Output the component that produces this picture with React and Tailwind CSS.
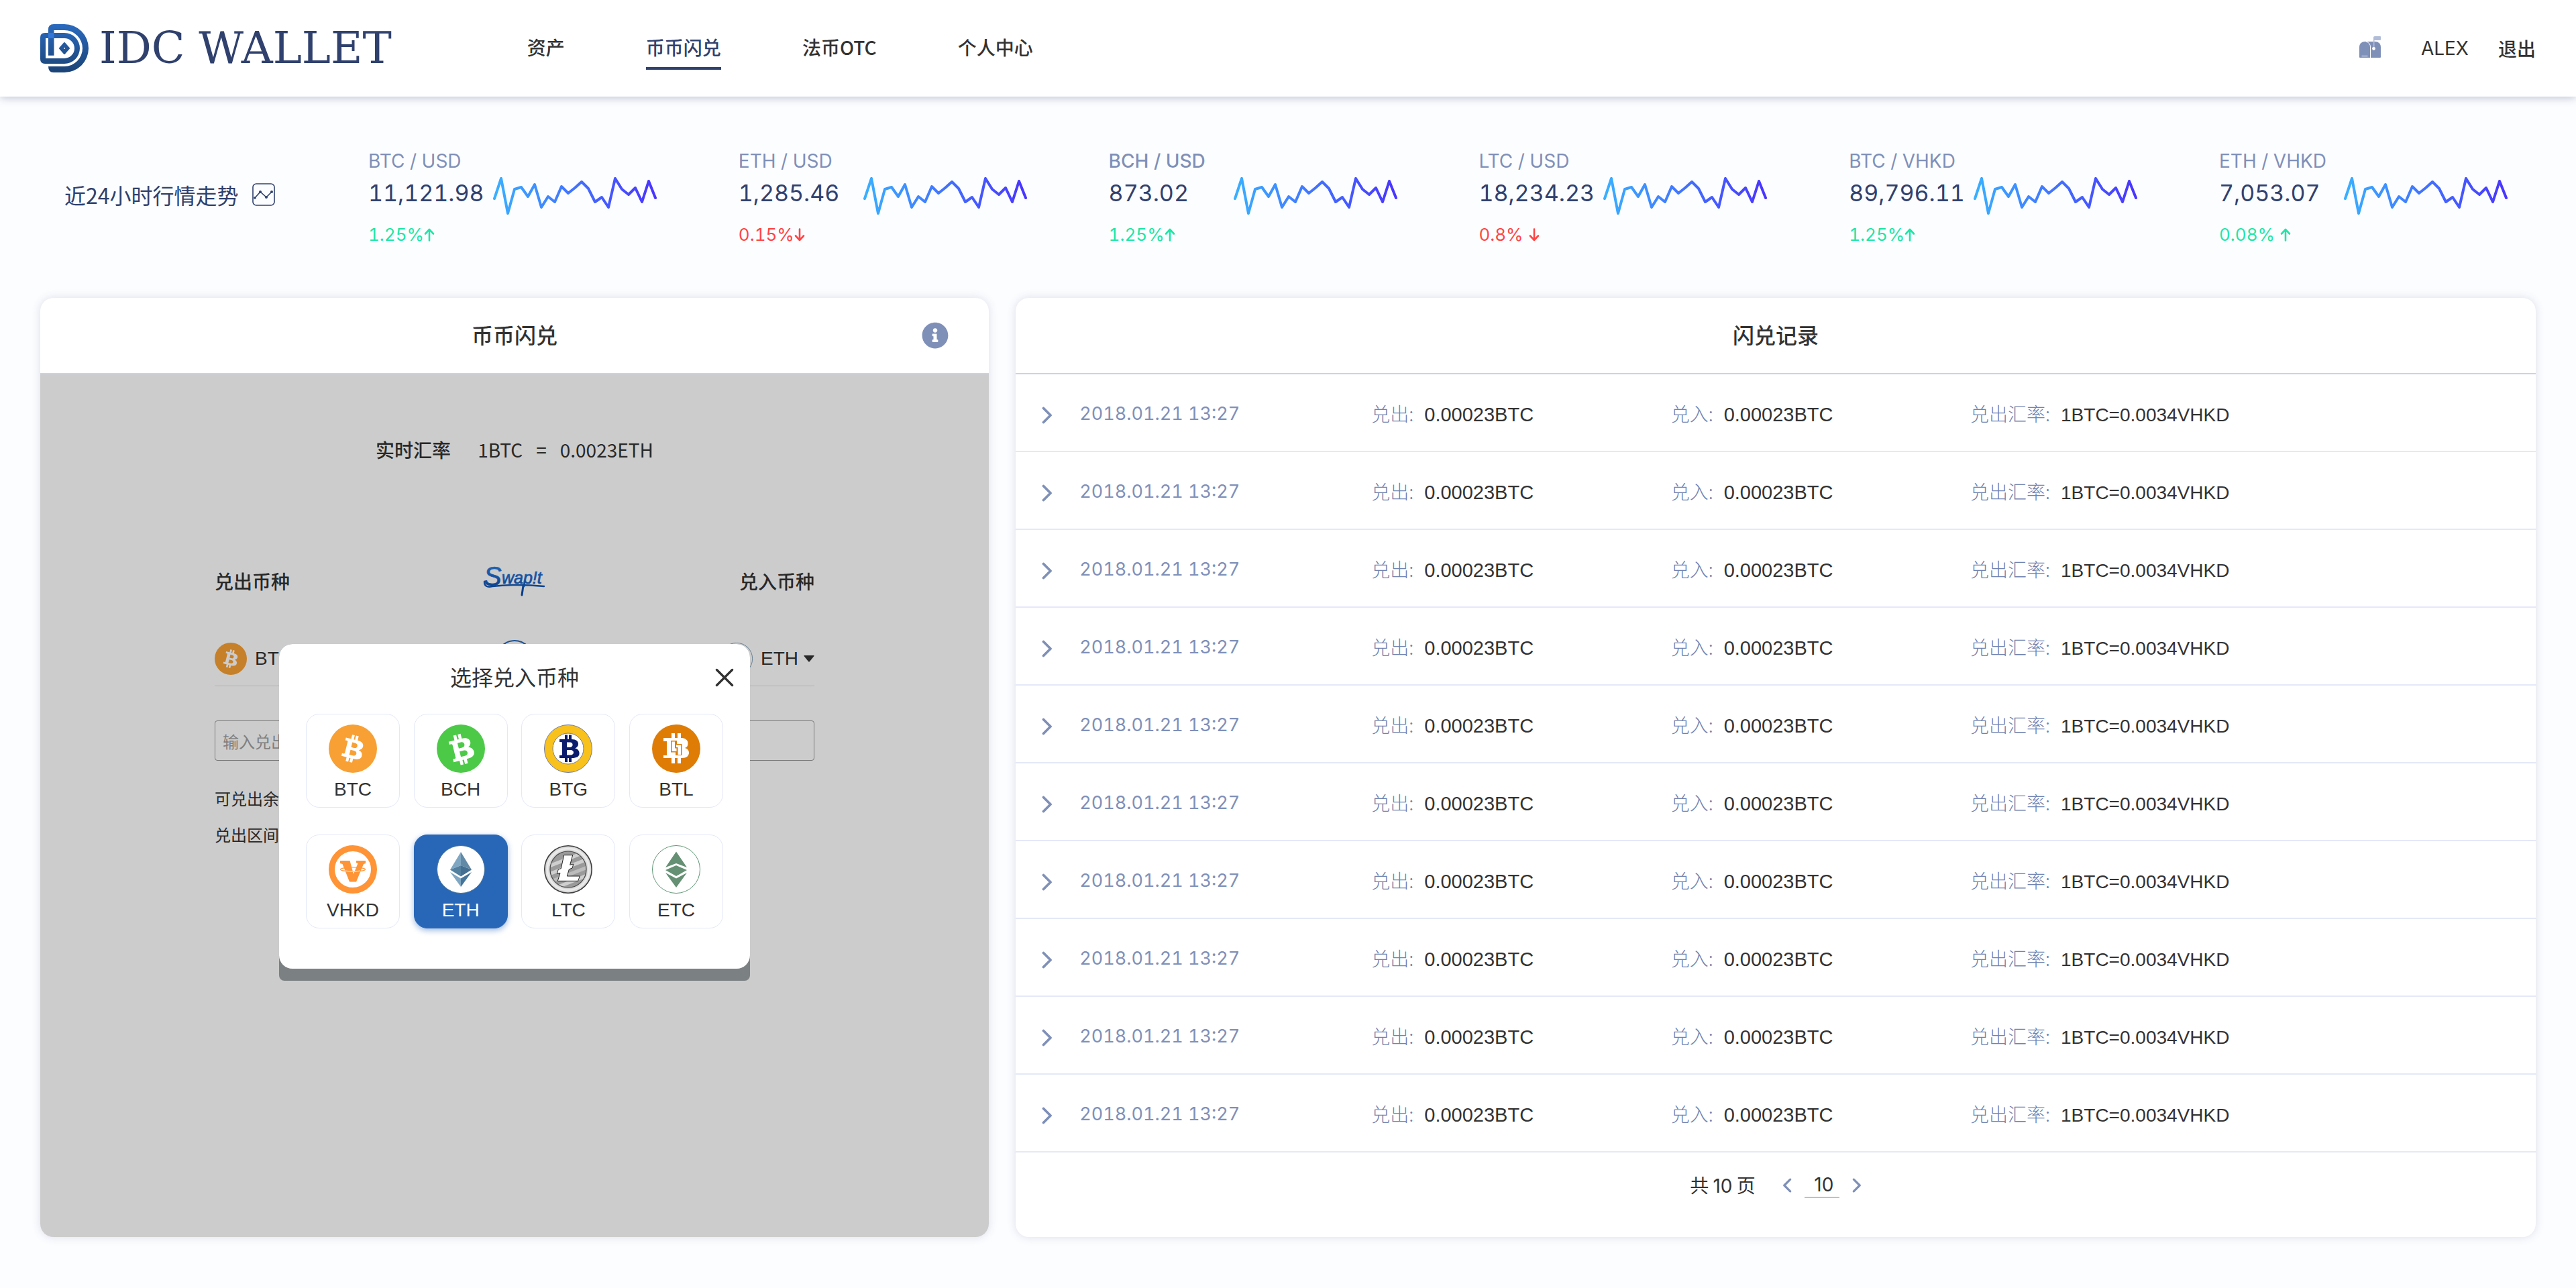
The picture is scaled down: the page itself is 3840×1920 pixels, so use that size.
import { FaInfoCircle } from "react-icons/fa";

const CJK = "font-['Noto_Sans_CJK_SC',sans-serif]";
const LATIN = "font-['Inter','Noto_Sans_CJK_SC',sans-serif] tabular-nums";
const ARIAL = "font-['Liberation_Sans','Noto_Sans_CJK_SC',sans-serif]";

const tickers = [
  { pair: "BTC / USD", price: "11,121.98", change: "1.25%", up: true },
  { pair: "ETH / USD", price: "1,285.46", change: "0.15%", up: false },
  { pair: "BCH / USD", price: "873.02", change: "1.25%", up: true, strong: true },
  { pair: "LTC / USD", price: "18,234.23", change: "0.8%", up: false, spaced: true },
  { pair: "BTC / VHKD", price: "89,796.11", change: "1.25%", up: true },
  { pair: "ETH / VHKD", price: "7,053.07", change: "0.08%", up: true, spaced: true },
];

const records = Array.from({ length: 10 }, (_, i) => ({
  id: i,
  time: "2018.01.21 13:27",
  out: "0.00023BTC",
  into: "0.00023BTC",
  rate: "1BTC=0.0034VHKD",
}));

function Logo() {
  return (
    <svg className="size-[72px]" viewBox="0 0 72 72" aria-hidden="true">
      <defs>
        <linearGradient id="logo" gradientUnits="userSpaceOnUse" x1="0" y1="0" x2="0" y2="72">
          <stop offset="0" stopColor="#2a6abf" />
          <stop offset="1" stopColor="#1a4375" />
        </linearGradient>
      </defs>
      <g fill="url(#logo)">
        <path d="M12 8Q12 0 20 0H36A36 36 0 0 1 36 72H20Q12 72 12 63H36A27 27 0 0 0 36 9H20.500V46.700H12Z" />
        <path fillRule="evenodd" d="M7 13H36A23 23 0 0 1 36 59H7Q0 59 0 52V20Q0 13 7 13ZM8 21V51H36A15 15 0 0 0 36 21Z" />
        <path fillRule="evenodd" stroke="url(#logo)" strokeWidth="2" strokeLinejoin="round" d="M36 28L43 36L36 44L29 36ZM36 33L33.500 36L36 39L38.500 36Z" />
      </g>
      <rect x="12" y="13" width="8.500" height="8" fill="#3378d8" />
    </svg>
  );
}

function Mailbox() {
  return (
    <svg className="size-8" viewBox="0 0 32 32" aria-hidden="true">
      <path fill="#7f90b8" d="M0 16A8 8 0 0 1 8 8H24A8 8 0 0 1 32 16V31Q32 32 31 32H1Q0 32 0 31Z" />
      <path fill="none" stroke="#fff" strokeWidth="1" d="M10 8Q16.500 10 16.500 16V32" />
      <path fill="#b1bdd8" d="M21 2Q21 0 23 0H31Q32 0 32 1V5Q32 6 31 6H22.500V18H21Z" />
      <circle cx="21.500" cy="18.500" r="2.400" fill="#fff" />
      <path stroke="#fff" strokeWidth="1.200" strokeLinecap="round" d="M4 29.500H12" />
    </svg>
  );
}

function Spark({ id }) {
  return (
    <svg className="mt-11 h-[58px] w-[244px] shrink-0" viewBox="0 0 244 58" fill="none" aria-hidden="true">
      <defs>
        <linearGradient id={id} gradientUnits="userSpaceOnUse" x1="0" y1="0" x2="244" y2="0">
          <stop offset="0" stopColor="#39b1ff" />
          <stop offset="1" stopColor="#4a33ff" />
        </linearGradient>
      </defs>
      <polyline
        stroke={`url(#${id})`}
        strokeWidth="4"
        strokeLinecap="round"
        strokeLinejoin="round"
        points="2,32 12,2 22,54 32,18 42,15 52,29 62,11 72,45 82,29 92,37 102,14 112,24 122,16 132,7 142,17 152,37 162,30 172,45 182,2 192,18 202,26 212,16 222,37 232,6 242,31"
      />
    </svg>
  );
}

function Arrow({ up }) {
  return (
    <svg className="h-5 w-4" viewBox="0 0 16 20" fill="none" stroke="currentColor" strokeWidth="2.600" strokeLinecap="round" strokeLinejoin="round" aria-hidden="true">
      <path d={up ? "M8 18.500V2M2 8.500L8 2L14 8.500" : "M8 1.500V18M2 11.500L8 18L14 11.500"} />
    </svg>
  );
}

function CoinB({ fill, transform }) {
  return (
    <g fill={fill} transform={transform}>
      <path
        fillRule="evenodd"
        d="M23 22H41C48 22 51 25 51 29C51 32 49 34.500 46 35.500C50 36 52.600 39 52.600 43C52.600 48 48 50 42 50H23V46H26L27 45V27L26 26H23ZM34 26.500V34H38.500C44 34 44 26.500 38.500 26.500ZM34 38V45.500H39.500C45.500 45.500 45.500 38 39.500 38Z"
      />
      <path d="M31 15.500H35V23H31ZM37 15.500H41V23H37ZM31 49H35V56H31ZM37 49H41V56H37Z" />
    </g>
  );
}

function EthDiamond() {
  return (
    <g>
      <path fill="#80a7c2" d="M36 10L20 36.500L36 30Z" />
      <path fill="#6289a5" d="M36 10L52 36.500L36 30Z" />
      <path fill="#5480a0" d="M36 30L20 36.500L36 46.500Z" />
      <path fill="#456f91" d="M36 30L52 36.500L36 46.500Z" />
      <path fill="#80a7c2" d="M20 40L36 49.500V62Z" />
      <path fill="#47759a" d="M52 40L36 49.500V62Z" />
    </g>
  );
}

const coinArt = {
  BTC: (
    <>
      <circle cx="36" cy="36" r="36" fill="#f8a034" />
      <CoinB fill="#fff" transform="rotate(14 36 36) translate(-1 .5)" />
    </>
  ),
  BCH: (
    <>
      <circle cx="36" cy="36" r="36" fill="#4cca47" />
      <CoinB fill="#fff" transform="rotate(-14 36 36) translate(-5 -3) scale(1.120)" />
    </>
  ),
  BTG: (
    <>
      <circle cx="36" cy="36" r="35.500" fill="#f8c11c" stroke="#6f7ba0" />
      <circle cx="36" cy="36" r="23" fill="#fff" stroke="#6f7ba0" />
      <CoinB fill="#0a1c6b" />
    </>
  ),
  BTL: (
    <>
      <circle cx="36" cy="36" r="36" fill="#df7c05" />
      <path fill="#fff" d="M17 20H45C51 21 53.500 24 53.500 28C53.500 32 52 34 49 35C53 36 55 39 55 42C55 47 51 50 45 50H17V46H22V25H17ZM29 13H34V21H29ZM38 13H43V21H38ZM29 49H34V58H29ZM38 49H43V58H38Z" />
      <path fill="#df7c05" d="M28 24H37V29H44.500V46H35V41.500H28Z" />
      <path fill="#fff" d="M29.500 25.500H34V35.500H36.500V40H29.500ZM36 30.500H43V45H38.500V34H36Z" />
    </>
  ),
  VHKD: (
    <>
      <circle cx="36" cy="36" r="31.500" fill="#fff" stroke="#ff9436" strokeWidth="9" />
      <path fill="#ff9436" d="M17 23H31.500L37 43L43.500 27L41 26V23H55V27L52 28L41 54.500H31L20.500 28L17 27Z" />
      <ellipse cx="36" cy="36" rx="18.500" ry="3" fill="none" stroke="#ff9436" strokeWidth="1.200" />
      <path fill="none" stroke="#ffe3c8" strokeWidth="1.200" d="M25 38.200Q36 40 47 38.200" />
    </>
  ),
  ETH: (
    <>
      <circle cx="36" cy="36" r="35.500" fill="#fff" stroke="#47759a" />
      <EthDiamond />
    </>
  ),
  LTC: (
    <>
      <defs>
        <radialGradient id="ltcRing">
          <stop offset="0.750" stopColor="#c4c4c4" />
          <stop offset="0.880" stopColor="#efefef" />
          <stop offset="1" stopColor="#c8c8c8" />
        </radialGradient>
        <clipPath id="ltcFace">
          <circle cx="36" cy="36" r="27" />
        </clipPath>
      </defs>
      <circle cx="36" cy="36" r="35.200" fill="url(#ltcRing)" stroke="#3e3e3e" strokeWidth="1.600" />
      <circle cx="36" cy="36" r="27" fill="#9a9a9a" />
      <g clipPath="url(#ltcFace)" stroke="#cfcfcf" strokeWidth="5">
        <path d="M0 34L72 6M0 46L72 18M0 70L72 42" />
        <path stroke="#bcbcbc" d="M0 58L72 30M10 78L72 54" />
      </g>
      <circle cx="36" cy="36" r="27" fill="none" stroke="#4a4a4a" strokeWidth="1.200" />
      <path
        fill="#fff"
        stroke="#222"
        strokeWidth="1"
        d="M29.700 14.700H42.700L38.700 29.300L43.700 28L42.300 33.700L37.300 36L34.300 46H53.300L50.700 53.300H20.300L24 41.300L19.300 42.300L21.300 36L25.300 34.700Z"
      />
    </>
  ),
  ETC: (
    <>
      <circle cx="36" cy="36" r="35.500" fill="#fff" stroke="#5d9674" />
      <path fill="#659073" d="M36 9.500L52 33L36 27L20 33ZM20 37L36 30L52 37L36 46ZM20 41L36 49.500L52 41L36 63Z" />
    </>
  ),
};

function Coin({ name, className }) {
  return (
    <svg className={className} viewBox="0 0 72 72" aria-hidden="true">
      {coinArt[name]}
    </svg>
  );
}

function Header() {
  const link = "border-b-4 border-transparent pt-1 pb-1";
  return (
    <header className="relative flex h-36 items-center bg-white px-[60px] text-[28px] leading-[52px] text-[#333] shadow-[0_2px_12px_rgba(47,65,110,0.3)]">
      <a href="#home" className="flex items-center gap-4" aria-label="IDC WALLET">
        <Logo />
        <span className="font-['DejaVu_Serif',serif] text-[65px] leading-[72px] whitespace-nowrap text-[#30416e]">IDC WALLET</span>
      </a>
      <nav className="ml-[202px] flex gap-[121px] font-medium whitespace-nowrap">
        <a href="#assets" className={link}>资产</a>
        <a href="#swap" aria-current="page" className="border-b-4 border-[#30416e] pt-1 pb-1 text-[#30416e]">币币闪兑</a>
        <a href="#otc" className={link}>法币OTC</a>
        <a href="#me" className={link}>个人中心</a>
      </nav>
      <div className="ml-auto flex items-center whitespace-nowrap">
        <button type="button" aria-label="消息" className="mr-[60px] pb-1"><Mailbox /></button>
        <a href="#user" className="mr-11 font-['Inter',sans-serif]">ALEX</a>
        <a href="#logout" className="font-medium">退出</a>
      </div>
    </header>
  );
}

function Market() {
  return (
    <section className="flex h-[300px] items-start pt-[76px] pr-[102px] pl-24">
      <h2 className="mt-[46px] flex w-[453px] shrink-0 items-center gap-5 text-[32px] leading-[48px] whitespace-nowrap text-[#30416e]">
        近24小时行情走势
        <svg className="size-[34px]" viewBox="0 0 34 34" fill="none" stroke="#30416e" strokeWidth="1.600" aria-hidden="true">
          <rect x="1" y="1" width="32" height="32" rx="5" />
          <path d="M4 22L12 13L21 21L29 13" />
          <g fill="#30416e" stroke="none">
            <circle cx="4" cy="22" r="1.800" />
            <circle cx="12" cy="13" r="2" />
            <circle cx="21" cy="21" r="2" />
            <circle cx="29" cy="13" r="2" />
          </g>
        </svg>
      </h2>
      <ul className={`flex grow justify-between whitespace-nowrap ${LATIN}`}>
        {tickers.map((t, i) => (
          <li key={t.pair} className="flex w-[430px] justify-between">
            <div className="w-[184px]">
              <p className={t.strong ? "text-[28px] leading-10 font-medium text-[#7f90b8]" : "text-[28px] leading-10 text-[#7f90b8]"}>{t.pair}</p>
              <p className="mt-2 text-[34px] leading-10 text-[#30416e]">{t.price}</p>
              <p className={t.up ? "mt-[22px] flex items-center text-[26px] leading-10 text-[#1ee6a8]" : "mt-[22px] flex items-center text-[26px] leading-10 text-[#ff4545]"}>
                <span className={t.spaced ? "mr-2" : ""}>{t.change}</span>
                <Arrow up={t.up} />
              </p>
            </div>
            <Spark id={`spark${i}`} />
          </li>
        ))}
      </ul>
    </section>
  );
}

function SwapMark() {
  return (
    <svg className="h-[62px] w-[94px]" viewBox="0 -7 94 62" role="img" aria-label="Swap!t">
      <defs>
        <linearGradient id="swap" gradientUnits="userSpaceOnUse" x1="0" y1="0" x2="0" y2="40">
          <stop offset="0" stopColor="#2a7fe6" />
          <stop offset="1" stopColor="#0a4ba8" />
        </linearGradient>
      </defs>
      <g fill="url(#swap)" stroke="url(#swap)" strokeWidth="0.700" fontFamily="Liberation Sans" fontStyle="italic">
        <text x="1" y="31" fontSize="40">S</text>
        <text x="28" y="28" fontSize="25">wap!t</text>
      </g>
      <path fill="none" stroke="url(#swap)" strokeWidth="2.500" strokeLinecap="round" d="M2 25Q2 35 14 32Q50 28 91 32" />
      <path stroke="url(#swap)" strokeWidth="3" strokeLinecap="round" d="M60 31L58 45" />
    </svg>
  );
}

function CoinField({ coin, label, placeholder, id }) {
  return (
    <div className="w-[360px]">
      <div className={`flex items-center border-b border-[#dcdcdc] pb-4 ${ARIAL} ${id === "in" ? "justify-end" : ""}`}>
        <button type="button" aria-haspopup="dialog" aria-label={`${label} ${coin}`} className="flex items-center gap-3 text-[28px] leading-[48px] text-[#333]">
          <Coin name={coin} className="size-12" />
          <span className="flex items-center gap-2">
            {coin}
            <svg className="h-2.5 w-4" viewBox="0 0 16 10" fill="#333" aria-hidden="true"><path d="M1 0H15Q16 0 15.500 1L9 9Q8 10 7 9L.5 1Q0 0 1 0Z" /></svg>
          </span>
        </button>
      </div>
      <input
        id={id}
        type="text"
        aria-label={`${label}数量`}
        placeholder={placeholder}
        className="mt-[51px] block h-[60px] w-full rounded border border-[#979797] bg-white px-[11px] text-2xl placeholder:text-[#a0a0a0]"
      />
    </div>
  );
}

function CoinDialog() {
  const card = "flex h-[140px] w-[140px] flex-col items-center rounded-[20px] border border-[#e3e8f8] bg-white pt-[15px] text-[#333]";
  const active = "flex h-[140px] w-[140px] flex-col items-center rounded-[20px] border border-[#2867b8] bg-[#2867b8] pt-[15px] text-white shadow-[0_3px_8px_rgba(40,103,184,0.45)]";
  return (
    <div role="dialog" aria-labelledby="pick" className="absolute top-[402px] left-1/2 w-[702px] -translate-x-1/2 rounded-t-[20px] rounded-b-lg bg-[#7b8083] pb-[18px]">
      <div className="rounded-[20px] bg-white px-10 pb-[60px]">
        <div className="grid grid-cols-[1fr_auto_1fr] items-start pt-6">
          <h3 id="pick" className="col-start-2 text-[32px] leading-[48px] text-[#333]">选择兑入币种</h3>
          <button type="button" aria-label="关闭" className="-mr-4 justify-self-end pt-3">
            <svg className="size-7" viewBox="0 0 28 28" stroke="#333" strokeWidth="3.400" strokeLinecap="round" aria-hidden="true">
              <path d="M2.500 2.500L25.500 25.500M25.500 2.500L2.500 25.500" />
            </svg>
          </button>
        </div>
        <div className={`mt-8 flex flex-col gap-10 text-[28px] leading-[34px] ${ARIAL}`}>
          {[["BTC", "BCH", "BTG", "BTL"], ["VHKD", "ETH", "LTC", "ETC"]].map((row) => (
            <div key={row[0]} className="flex justify-between">
              {row.map((c) => (
                <button key={c} type="button" aria-pressed={c === "ETH"} className={c === "ETH" ? active : card}>
                  <Coin name={c} className="size-[72px]" />
                  <span className="mt-2">{c}</span>
                </button>
              ))}
            </div>
          ))}
        </div>
      </div>
    </div>
  );
}

function SwapPanel() {
  return (
    <section className="flex flex-col rounded-[20px] bg-white text-[#333] shadow-[0_0_14px_rgba(47,65,110,0.16)]">
      <div className="grid grid-cols-[1fr_auto_1fr] items-center border-b-2 border-[#c8d2ec] px-[60px]">
        <h2 className="col-start-2 pb-1 text-[32px] leading-[108px] font-medium">币币闪兑</h2>
        <button type="button" aria-label="说明" className="justify-self-end">
          <FaInfoCircle className="size-10 text-[#7f90b8]" />
        </button>
      </div>
      <div className="relative grow rounded-b-[20px]">
        <div className="px-[260px] pt-[92px] text-[28px] leading-10">
          <p className="flex justify-center whitespace-nowrap">
            <span className="mr-10 font-medium">实时汇率</span>
            <span>1BTC</span>
            <span className="mx-5">=</span>
            <span>0.0023ETH</span>
          </p>
          <div className="mt-[145px] flex items-center justify-between font-medium">
            <span>兑出币种</span>
            <SwapMark />
            <span>兑入币种</span>
          </div>
          <div className="mt-[61px] flex justify-between">
            <CoinField coin="BTC" label="兑出币种" placeholder="输入兑出数量" id="out" />
            <button type="button" aria-label="互换" className="-mt-1 h-14">
              <svg className="size-14" viewBox="0 0 56 56" fill="none" stroke="#2867b8" strokeWidth="2" aria-hidden="true">
                <circle cx="28" cy="28" r="27" />
                <path d="M16 24H40L33 17M40 32H16L23 39" />
              </svg>
            </button>
            <CoinField coin="ETH" label="兑入币种" id="in" />
          </div>
          <p className="mt-[38px] text-2xl leading-9">可兑出余额</p>
          <p className="mt-[18px] text-2xl leading-9">兑出区间</p>
        </div>
        <div className="absolute inset-0 rounded-b-[20px] bg-black/20" />
        <CoinDialog />
      </div>
    </section>
  );
}

function Chevron({ left, className }) {
  return (
    <svg className={className} viewBox="0 0 16 26" fill="none" stroke="#7f90b8" strokeWidth="3.800" strokeLinecap="round" strokeLinejoin="round" aria-hidden="true">
      <path d={left ? "M13.500 2.500L3 13L13.500 23.500" : "M2.500 2.500L13 13L2.500 23.500"} />
    </svg>
  );
}

function HistoryPanel() {
  return (
    <section className="flex flex-col rounded-[20px] bg-white text-[#333] shadow-[0_0_14px_rgba(47,65,110,0.16)]">
      <h2 className="border-b-2 border-[#c8d2ec] pb-1 text-center text-[32px] leading-[108px] font-medium">闪兑记录</h2>
      <table className="w-full table-fixed border-separate border-spacing-0 text-left whitespace-nowrap">
        <colgroup>
          <col className="w-[4.2%]" />
          <col className="w-[19.2%]" />
          <col className="w-[19.7%]" />
          <col className="w-[19.7%]" />
          <col />
        </colgroup>
        <tbody className="text-[28px] leading-10 [&_td]:h-[116px] [&_td]:border-b-2 [&_td]:border-[#e4e8f8] [&_td]:px-0 [&_td]:pt-1 [&_td]:pb-0 [&_td]:align-middle">
          {records.map((r) => (
            <tr key={r.id}>
              <td>
                <button type="button" aria-label="展开" className="ml-[39px] block pt-1">
                  <Chevron className="h-[26px] w-4" />
                </button>
              </td>
              <td className={`text-[27px] text-[#7f90b8] ${LATIN}`}>{r.time}</td>
              <td>
                <span className="mr-4 font-light text-[#7183b0]">兑出:</span>
                <span className={`text-[29px] ${ARIAL}`}>{r.out}</span>
              </td>
              <td>
                <span className="mr-4 font-light text-[#7183b0]">兑入:</span>
                <span className={`text-[29px] ${ARIAL}`}>{r.into}</span>
              </td>
              <td>
                <span className="mr-4 font-light text-[#7183b0]">兑出汇率:</span>
                <span className={ARIAL}>{r.rate}</span>
              </td>
            </tr>
          ))}
        </tbody>
      </table>
      <div className="flex items-center justify-center pt-7 pb-14 text-[28px] leading-10">
        <span className={`mr-10 ${CJK}`}>
          共 <span className="font-['Inter',sans-serif]">10</span> 页
        </span>
        <button type="button" aria-label="上一页"><Chevron left className="h-[22px] w-3.5" /></button>
        <input aria-label="页码" defaultValue="10" className="mx-[19px] h-[38px] w-[52px] border-b-2 border-[#bbc0d6] pl-1.5 text-center font-['Inter',sans-serif]" />
        <button type="button" aria-label="下一页"><Chevron className="h-[22px] w-3.5" /></button>
      </div>
    </section>
  );
}

export default function App() {
  return (
    <div className={`min-h-screen bg-[#fcfdff] pb-[76px] ${CJK}`}>
      <Header />
      <Market />
      <main className="grid grid-cols-[1414fr_2266fr] gap-10 px-[60px]">
        <SwapPanel />
        <HistoryPanel />
      </main>
    </div>
  );
}
